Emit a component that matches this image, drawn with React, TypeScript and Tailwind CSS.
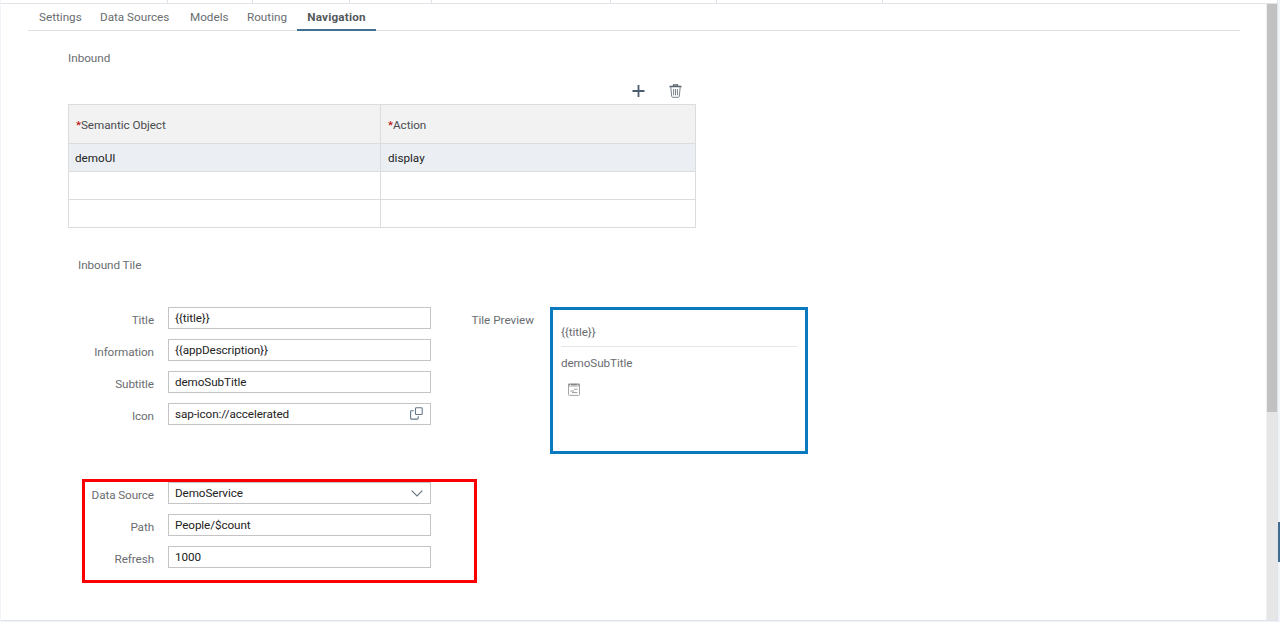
import type { ReactNode } from "react";

const TABS = [
  { label: "Settings", width: "w-[61px]" },
  { label: "Data Sources", width: "w-[90px]" },
  { label: "Models", width: "w-[57px]" },
  { label: "Routing", width: "w-[50px]" },
];

const EDITOR_TABS = [
  "w-[167px]",
  "w-[85px]",
  "w-[97px]",
  "w-[82px]",
  "w-[179px]",
  "w-[106px]",
  "w-[166px]",
];

const ROWS = [
  { object: "demoUI", action: "display", className: "h-[27px] bg-[#ebeff4]" },
  { object: "", action: "", className: "h-[27px]" },
  { object: "", action: "", className: "h-[27px]" },
];

function PlusIcon() {
  return (
    <svg width="13" height="12" viewBox="0 0 13 12" fill="none">
      <path d="M6.5 0v12M0.5 6h12" stroke="#4d5d70" strokeWidth="1.8" />
    </svg>
  );
}

function TrashIcon() {
  return (
    <svg width="13" height="14" viewBox="0 0 13 14" fill="none">
      <path d="M0.5 2.5h12M4.5 2V0.8h4V2" stroke="#5b6673" strokeWidth="1.3" />
      <path
        d="M1.8 3l.9 9.3q.1 1 1 1h5.6q.9 0 1-1L11.2 3M4.6 5v6.3M6.5 5v6.3M8.4 5v6.3"
        stroke="#7b838c"
      />
    </svg>
  );
}

function ValueHelpIcon() {
  return (
    <svg width="13" height="13" viewBox="0 0 13 13" fill="none" stroke="#66788a" strokeWidth="1.1">
      <rect x="5.5" y="0.8" width="6.7" height="6.7" rx="0.8" />
      <path d="M3.8 3.8H1.4q-.8 0-.8.8v6.7q0 .8.8.8h6q.8 0 .8-.8V9.2" />
    </svg>
  );
}

function ChevronIcon() {
  return (
    <svg width="12" height="7" viewBox="0 0 12 7" fill="none">
      <path d="M0.7 0.7L6 6l5.3-5.3" stroke="#66727f" strokeWidth="1.1" />
    </svg>
  );
}

function TileIcon() {
  return (
    <svg width="12" height="13" viewBox="0 0 12 13" fill="none">
      <rect x="0.5" y="1" width="11" height="11.4" rx="0.8" stroke="#a5a5a5" />
      <path d="M0.5 1.6h11" stroke="#858585" strokeWidth="1.6" strokeDasharray="1.6 .7 6.4 .7" />
      <path d="M0.5 3.3h11" stroke="#b5b5b5" strokeWidth=".8" />
      <path d="M6 6.2h3.5M2.2 8h4M4 9.6h5.5" stroke="#929292" strokeWidth=".9" />
    </svg>
  );
}

type FieldProps = { label: string; value: string; icon?: ReactNode };

function Field({ label, value, icon }: FieldProps) {
  return (
    <div className="flex h-[22px] items-center">
      <span className="w-[86px] translate-y-[2px] text-right tracking-[-0.08px] text-[#6a6d70]">
        {label}
      </span>
      <div className="ml-[14px] flex h-[22px] w-[263px] items-center justify-between border border-[#c4c4c4] bg-white pr-[7px] pl-[6px] tracking-[-0.09px] text-[#222]">
        <span>{value}</span>
        {icon}
      </div>
    </div>
  );
}

function InboundTable() {
  return (
    <div className="w-[628px] border border-[#dcdcdc]">
      <div className="flex h-[39px] items-center border-b border-[#dcdcdc] bg-[#f2f2f2] tracking-[-0.05px] text-[#4a4c4e]">
        <div className="flex h-full w-[312px] items-center border-r border-[#dcdcdc] pt-px pl-[7px]">
          <span className="text-[#b00]">*</span>Semantic Object
        </div>
        <div className="pt-px pl-[7px]">
          <span className="text-[#b00]">*</span>Action
        </div>
      </div>
      <div className="divide-y divide-[#dcdcdc] text-[#222]">
        {ROWS.map((row, i) => (
          <div key={i} className={`box-content flex items-center ${row.className}`}>
            <div className="flex h-full w-[312px] items-center border-r border-[#dcdcdc] pl-[6px]">
              {row.object}
            </div>
            <div className="pl-[7px]">{row.action}</div>
          </div>
        ))}
      </div>
    </div>
  );
}

export default function App() {
  return (
    <div className="relative flex h-[622px] w-[1280px] overflow-hidden bg-[#f0f3f8] pl-px font-[Roboto,sans-serif] text-[11.7px] leading-4 whitespace-nowrap text-[#6a6d70]">
      <div className="flex w-[1276px] flex-col">
        <div className="flex h-1 border-b border-[#e1e3e8] bg-white">
          {EDITOR_TABS.map((width, i) => (
            <div key={i} className={`border-r border-[#e1e3e8] ${width}`} />
          ))}
        </div>

        <div className="flex h-[616px] bg-white">
          <main className="w-[1265px]">
            {/* Section tabs */}
            <nav className="ml-[27px] flex h-[27px] w-[1212px] border-b border-[#e0e0e0] pl-[11px]">
              {TABS.map((tab) => (
                <span key={tab.label} className={`pt-[5px] ${tab.width}`}>
                  {tab.label}
                </span>
              ))}
              <span className="h-[27px] w-[79px] border-b-2 border-[#427093] pt-[5px] text-center font-bold tracking-[0.2px] text-[#55585b]">
                Navigation
              </span>
            </nav>

            <div className="pt-[19px] pl-[67px]">
              <h2>Inbound</h2>
              <div className="flex h-[38px] w-[614px] items-center justify-end gap-6 pt-[12px]">
                <PlusIcon />
                <TrashIcon />
              </div>
              <InboundTable />

              <h2 className="mt-[29px] ml-[10px] tracking-[-0.05px]">Inbound Tile</h2>
              <div className="mt-[34px] flex">
                <div className="flex w-[363px] flex-col gap-[9.85px]">
                  <Field label="Title" value="{{title}}" />
                  <Field label="Information" value="{{appDescription}}" />
                  <Field label="Subtitle" value="demoSubTitle" />
                  <Field label="Icon" value="sap-icon://accelerated" icon={<ValueHelpIcon />} />
                </div>
                <span className="mt-[5px] w-[103px] text-right">Tile Preview</span>
                <div className="ml-4 h-[147px] w-[258px] border-3 border-[#0a7ac0] px-2 pt-[14px] tracking-[-0.09px]">
                  <div className="border-b border-[#e5e5e5] pb-[6px]">{"{{title}}"}</div>
                  <div className="mt-2 mb-[12px]">demoSubTitle</div>
                  <div className="pl-[7px]">
                    <TileIcon />
                  </div>
                </div>
              </div>

              {/* Dynamic data */}
              <div className="relative mt-[28px] flex flex-col gap-[9.85px]">
                <Field label="Data Source" value="DemoService" icon={<ChevronIcon />} />
                <Field label="Path" value="People/$count" />
                <Field label="Refresh" value="1000" />
                <div className="absolute -top-[3px] left-[14px] h-[104px] w-[395px] border-3 border-[#fa0000]" />
              </div>
            </div>
          </main>

          <div className="w-[11px] border-l border-[#f0f0f0] bg-[#e6e6e6]">
            <div className="h-[408px] bg-[#c1c1c1]" />
          </div>
        </div>
        <div className="h-px bg-[#dfe2ea]" />
      </div>

      <div className="flex w-[3px] flex-col border-l border-[#e0e4ea]">
        <div className="mt-[522px] h-10 w-[3px] bg-[#3f6c8f]" />
      </div>
    </div>
  );
}
